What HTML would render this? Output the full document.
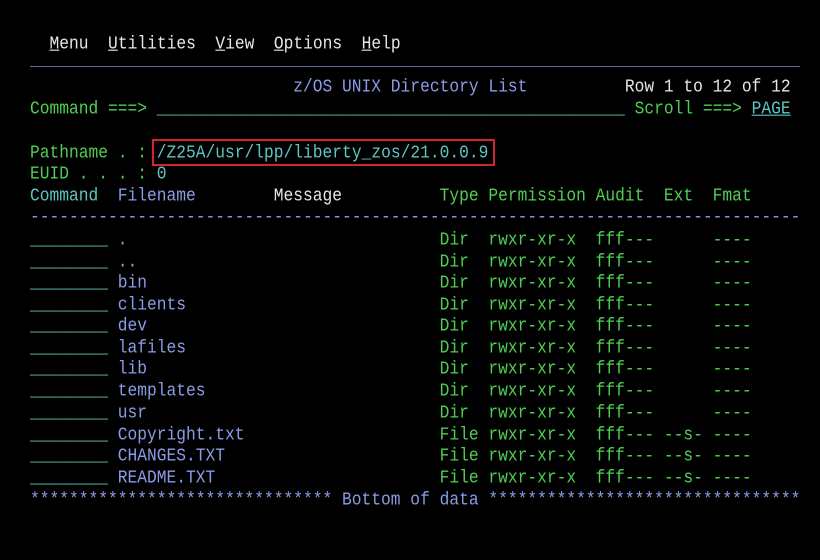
<!DOCTYPE html><html><head><style>
body{margin:0;width:820px;height:560px;background:#000;overflow:hidden;position:relative;font-family:"Liberation Mono",monospace;font-size:16.25px}
.l{position:absolute;left:30px;height:21.6px;line-height:21.6px;white-space:pre;transform:scaleY(1.12);transform-origin:0 50%}
.g{color:#4fcf52}.t{color:#5ec6c0}.b{color:#8c9be6}.w{color:#e6e6e6}.u{text-decoration:underline}
</style></head><body>
<div style="position:absolute;left:30px;top:66px;width:770px;height:1px;background:#5a6aa8"></div>
<div style="position:absolute;left:152px;top:139px;width:343px;height:27px;border:2px solid #d0252a;box-sizing:border-box"></div>
<div class="l w" style="top:33px">  <span class="u">M</span>enu  <span class="u">U</span>tilities  <span class="u">V</span>iew  <span class="u">O</span>ptions  <span class="u">H</span>elp</div>
<div class="l" style="top:76px"><span class="b">                           z/OS UNIX Directory List</span><span class="w">          Row 1 to 12 of 12</span></div>
<div class="l" style="top:98px"><span class="g">Command ===> </span><span class="t">________________________________________________</span><span class="g"> Scroll ===> </span><span class="t u">PAGE</span></div>
<div class="l" style="top:142px"><span class="g">Pathname . : </span><span class="t">/Z25A/usr/lpp/liberty_zos/21.0.0.9</span></div>
<div class="l" style="top:163px"><span class="g">EUID . . . : </span><span class="t">0</span></div>
<div class="l" style="top:185px"><span class="t">Command  </span><span class="b">Filename</span><span class="w">        Message</span><span class="g">          Type Permission Audit  Ext  Fmat</span></div>
<div class="l b" style="top:206px">-------------------------------------------------------------------------------</div>
<div class="l" style="top:229px"><span class="t">________ </span><span class="b">.</span><span class="g">                                Dir  rwxr-xr-x  fff---      ----</span></div>
<div class="l" style="top:251px"><span class="t">________ </span><span class="b">..</span><span class="g">                               Dir  rwxr-xr-x  fff---      ----</span></div>
<div class="l" style="top:272px"><span class="t">________ </span><span class="b">bin</span><span class="g">                              Dir  rwxr-xr-x  fff---      ----</span></div>
<div class="l" style="top:294px"><span class="t">________ </span><span class="b">clients</span><span class="g">                          Dir  rwxr-xr-x  fff---      ----</span></div>
<div class="l" style="top:315px"><span class="t">________ </span><span class="b">dev</span><span class="g">                              Dir  rwxr-xr-x  fff---      ----</span></div>
<div class="l" style="top:337px"><span class="t">________ </span><span class="b">lafiles</span><span class="g">                          Dir  rwxr-xr-x  fff---      ----</span></div>
<div class="l" style="top:358px"><span class="t">________ </span><span class="b">lib</span><span class="g">                              Dir  rwxr-xr-x  fff---      ----</span></div>
<div class="l" style="top:380px"><span class="t">________ </span><span class="b">templates</span><span class="g">                        Dir  rwxr-xr-x  fff---      ----</span></div>
<div class="l" style="top:402px"><span class="t">________ </span><span class="b">usr</span><span class="g">                              Dir  rwxr-xr-x  fff---      ----</span></div>
<div class="l" style="top:424px"><span class="t">________ </span><span class="b">Copyright.txt</span><span class="g">                    File rwxr-xr-x  fff--- --s- ----</span></div>
<div class="l" style="top:445px"><span class="t">________ </span><span class="b">CHANGES.TXT</span><span class="g">                      File rwxr-xr-x  fff--- --s- ----</span></div>
<div class="l" style="top:467px"><span class="t">________ </span><span class="b">README.TXT</span><span class="g">                       File rwxr-xr-x  fff--- --s- ----</span></div>
<div class="l b" style="top:489px">******************************* Bottom of data ********************************</div>
</body></html>
